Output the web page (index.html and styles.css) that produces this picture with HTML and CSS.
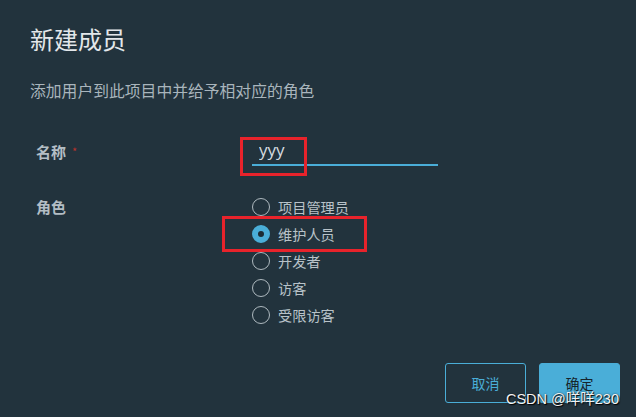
FILE: index.html
```html
<!DOCTYPE html>
<html lang="zh">
<head>
    <meta charset="UTF-8">
    <meta name="viewport" content="width=device-width, initial-scale=1.0">
    <title>新建成员</title>
    <link rel="stylesheet" href="styles.css">
</head>
<body>
    <div class="dialog">
        <h1 class="dialog-title">新建成员</h1>
        <p class="dialog-desc">添加用户到此项目中并给予相对应的角色</p>

        <form class="member-form">
            <div class="form-row">
                <label class="form-label" for="name">名称<span class="required">*</span></label>
                <div class="field">
                    <input type="text" id="name" class="text-input" value="yyy">
                    <span class="mark mark-name"></span>
                </div>
            </div>
            <div class="form-row">
                <span class="form-label">角色</span>
                <div class="radio-list">
                    <label class="radio"><input type="radio" name="role"><span class="dot"></span>项目管理员</label>
                    <label class="radio"><input type="radio" name="role" checked><span class="dot"></span>维护人员<span class="mark mark-role"></span></label>
                    <label class="radio"><input type="radio" name="role"><span class="dot"></span>开发者</label>
                    <label class="radio"><input type="radio" name="role"><span class="dot"></span>访客</label>
                    <label class="radio"><input type="radio" name="role"><span class="dot"></span>受限访客</label>
                </div>
            </div>
            <div class="actions">
                <button type="button" class="btn btn-cancel">取消</button>
                <button type="submit" class="btn btn-ok">确定</button>
            </div>
        </form>
    </div>
    <div class="watermark">CSDN @咩咩230</div>
</body>
</html>
```

FILE: styles.css
```css
html, body {
    height: 100%;
}
body {
    margin: 0;
    background-color: #22333d;
    font-family: "Noto Sans CJK SC", "Noto Sans", sans-serif;
    overflow: hidden;
}
.dialog {
    padding: 24px 16px 0 30px;
}
.dialog-title {
    margin: 0;
    font-size: 24px;
    line-height: 30px;
    font-weight: normal;
    color: #e3e7ea;
}
.dialog-desc {
    margin: 26px 0 0;
    font-size: 15.8px;
    line-height: 22px;
    color: #a9b5bc;
}
.member-form {
    margin-top: 34px;
}
.form-row {
    display: grid;
    grid-template-columns: 222px 1fr;
    margin-bottom: 26px;
}
.form-label {
    padding-left: 6px;
    font-size: 15px;
    font-weight: bold;
    color: #b3bec5;
    line-height: 30px;
}
.form-row:nth-child(2) .form-label {
    line-height: 27px;
}
.required {
    margin-left: 6px;
    font-size: 11px;
    font-weight: normal;
    color: #b8322b;
    vertical-align: 2px;
}
.field {
    position: relative;
    width: 186px;
}
.text-input {
    box-sizing: border-box;
    width: 186px;
    height: 30px;
    padding: 0 0 2px 7px;
    border: none;
    border-bottom: 2px solid #4aaed8;
    background: transparent;
    font-family: "Open Sans", "Noto Sans", sans-serif;
    font-size: 17px;
    color: #d5dce0;
    outline: none;
}
.radio-list {
    display: flex;
    flex-direction: column;
}
.radio {
    position: relative;
    display: flex;
    align-items: center;
    height: 27px;
    font-size: 14.2px;
    color: #b8c2c8;
}
.radio input {
    display: none;
}
.dot {
    box-sizing: border-box;
    width: 18px;
    height: 18px;
    margin-right: 8px;
    border: 1.5px solid #aeb9bf;
    border-radius: 50%;
}
.radio input:checked + .dot {
    border: 6.5px solid #4aaed8;
    background-color: #1c2b33;
}
.mark {
    position: absolute;
    box-sizing: border-box;
    border: 3px solid #e8232b;
}
.mark-name {
    left: -12px;
    top: 1px;
    width: 67px;
    height: 39px;
}
.mark-role {
    left: -30px;
    top: -4px;
    width: 145px;
    height: 36px;
}
.actions {
    display: flex;
    justify-content: flex-end;
    gap: 13px;
    margin-top: 35px;
}
.btn {
    width: 81px;
    height: 40px;
    border-radius: 3px;
    font-family: "Noto Sans CJK SC", sans-serif;
    font-size: 14px;
    cursor: pointer;
}
.btn-cancel {
    background: transparent;
    border: 1px solid #4aaed8;
    color: #4aaed8;
}
.btn-ok {
    background-color: #4aaed8;
    border: 1px solid #4aaed8;
    color: #16242c;
}
.watermark {
    position: absolute;
    right: 17px;
    bottom: 9px;
    font-family: "Liberation Sans", "Noto Sans CJK SC", sans-serif;
    font-size: 14.5px;
    color: #f2f2f2;
    text-shadow: 1px 1px 1px #000, 0 0 2px rgba(0, 0, 0, 0.6);
}
```
